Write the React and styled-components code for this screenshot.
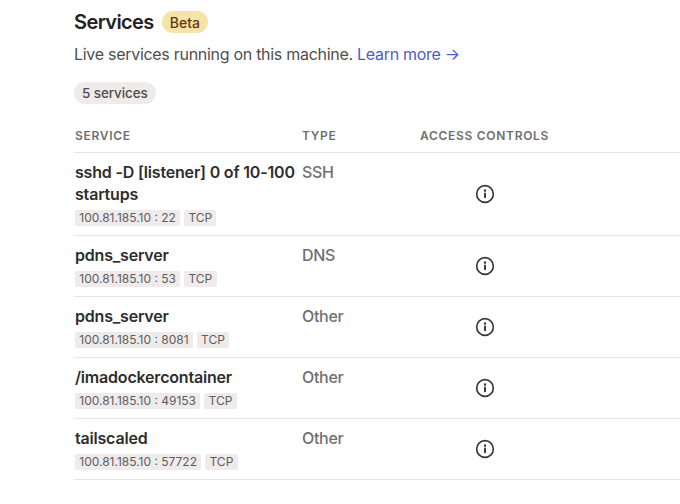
import React from "react"
import styled, { createGlobalStyle } from "styled-components"

const GlobalStyle = createGlobalStyle`
  html, body {
    margin: 0;
    padding: 0;
    background: #fff;
    overflow: hidden;
  }
  body {
    font-family: Inter, "Liberation Sans", sans-serif;
    color: #2e2d2d;
  }
`

const Page = styled.div`
  width: 680px;
  height: 504px;
  padding: 9px 0 0 74px;
  box-sizing: border-box;
  overflow: hidden;
`

const TitleRow = styled.div`
  display: flex;
  align-items: center;
  gap: 8px;
  height: 26px;
`

const Title = styled.h1`
  margin: 0;
  font-size: 20px;
  line-height: 26px;
  font-weight: 600;
  letter-spacing: -0.6px;
  color: #232222;
`

const BetaBadge = styled.span`
  display: inline-flex;
  align-items: center;
  height: 22px;
  padding: 0 8px;
  border-radius: 11px;
  background: #f5e3a8;
  color: #66350f;
  font-size: 14px;
  font-weight: 500;
`

const Lead = styled.p`
  margin: 7px 0 0;
  font-size: 16px;
  line-height: 24px;
  letter-spacing: -0.018em;
  color: #4f4e4e;
`

const LearnMore = styled.a`
  color: #4b5fc4;
  text-decoration: none;
`

const CountPill = styled.div`
  display: inline-flex;
  align-items: center;
  height: 22px;
  margin-top: 16px;
  padding: 0 8px;
  border-radius: 11px;
  background: #eeebea;
  color: #4f4e4e;
  font-size: 13.5px;
  letter-spacing: -0.1px;
  font-weight: 500;
`

const Grid = styled.div`
  display: grid;
  grid-template-columns: 227px 118px 130px 1fr;
  padding-left: 1px;
`

const HeadRow = styled(Grid)`
  margin-top: 15px;
  height: 33px;
  align-items: center;
  border-bottom: 1px solid #e8e6e5;
`

const HeadCell = styled.div`
  font-size: 12px;
  font-weight: 600;
  letter-spacing: 0.7px;
  color: #706f6f;
`

const Row = styled(Grid)`
  padding-top: 8px;
  padding-bottom: 9px;
  box-sizing: border-box;
  border-bottom: 1px solid #e8e6e5;
`

const Name = styled.div`
  font-size: 16px;
  line-height: 22px;
  font-weight: 600;
  letter-spacing: -0.012em;
  color: #2e2d2d;
`

const Tags = styled.div`
  display: flex;
  gap: 4px;
  margin-top: 5px;
`

const Tag = styled.span`
  display: inline-flex;
  align-items: center;
  height: 16px;
  padding: 0 4.25px 1px;
  box-sizing: border-box;
  border-radius: 2px;
  background: #eeebea;
  color: #5e5d5d;
  font-size: 12px;
`

const TypeCell = styled.div`
  font-size: 16px;
  line-height: 22px;
  font-weight: 500;
  letter-spacing: -0.02em;
  color: #706f6f;
`

const AccessCell = styled.div`
  display: flex;
  align-items: center;
  justify-content: center;
  color: #3a3939;
`

const InfoIcon = () => (
  <svg width="20" height="20" viewBox="0 0 24 24" fill="none" stroke="currentColor" strokeWidth="2" strokeLinecap="round">
    <circle cx="12" cy="12" r="10" />
    <path d="M12 16v-4.5" strokeWidth="2.4" />
    <path d="M12 7.8v.2" strokeWidth="2.8" />
  </svg>
)

const services = [
  { name: "sshd -D [listener] 0 of 10-100 startups", port: 22, type: "SSH" },
  { name: "pdns_server", port: 53, type: "DNS" },
  { name: "pdns_server", port: 8081, type: "Other" },
  { name: "/imadockercontainer", port: 49153, type: "Other" },
  { name: "tailscaled", port: 57722, type: "Other" },
]

export default function App() {
  return (
    <Page>
      <GlobalStyle />
      <TitleRow>
        <Title>Services</Title>
        <BetaBadge>Beta</BetaBadge>
      </TitleRow>
      <Lead>
        Live services running on this machine. <LearnMore href="#">Learn more →</LearnMore>
      </Lead>
      <CountPill>5 services</CountPill>
      <HeadRow>
        <HeadCell>SERVICE</HeadCell>
        <HeadCell>TYPE</HeadCell>
        <HeadCell>ACCESS CONTROLS</HeadCell>
      </HeadRow>
      {services.map(s => (
        <Row key={s.name + s.port}>
          <div>
            <Name>{s.name}</Name>
            <Tags>
              <Tag>100.81.185.10 : {s.port}</Tag>
              <Tag>TCP</Tag>
            </Tags>
          </div>
          <TypeCell>{s.type}</TypeCell>
          <AccessCell>
            <InfoIcon />
          </AccessCell>
        </Row>
      ))}
    </Page>
  )
}
